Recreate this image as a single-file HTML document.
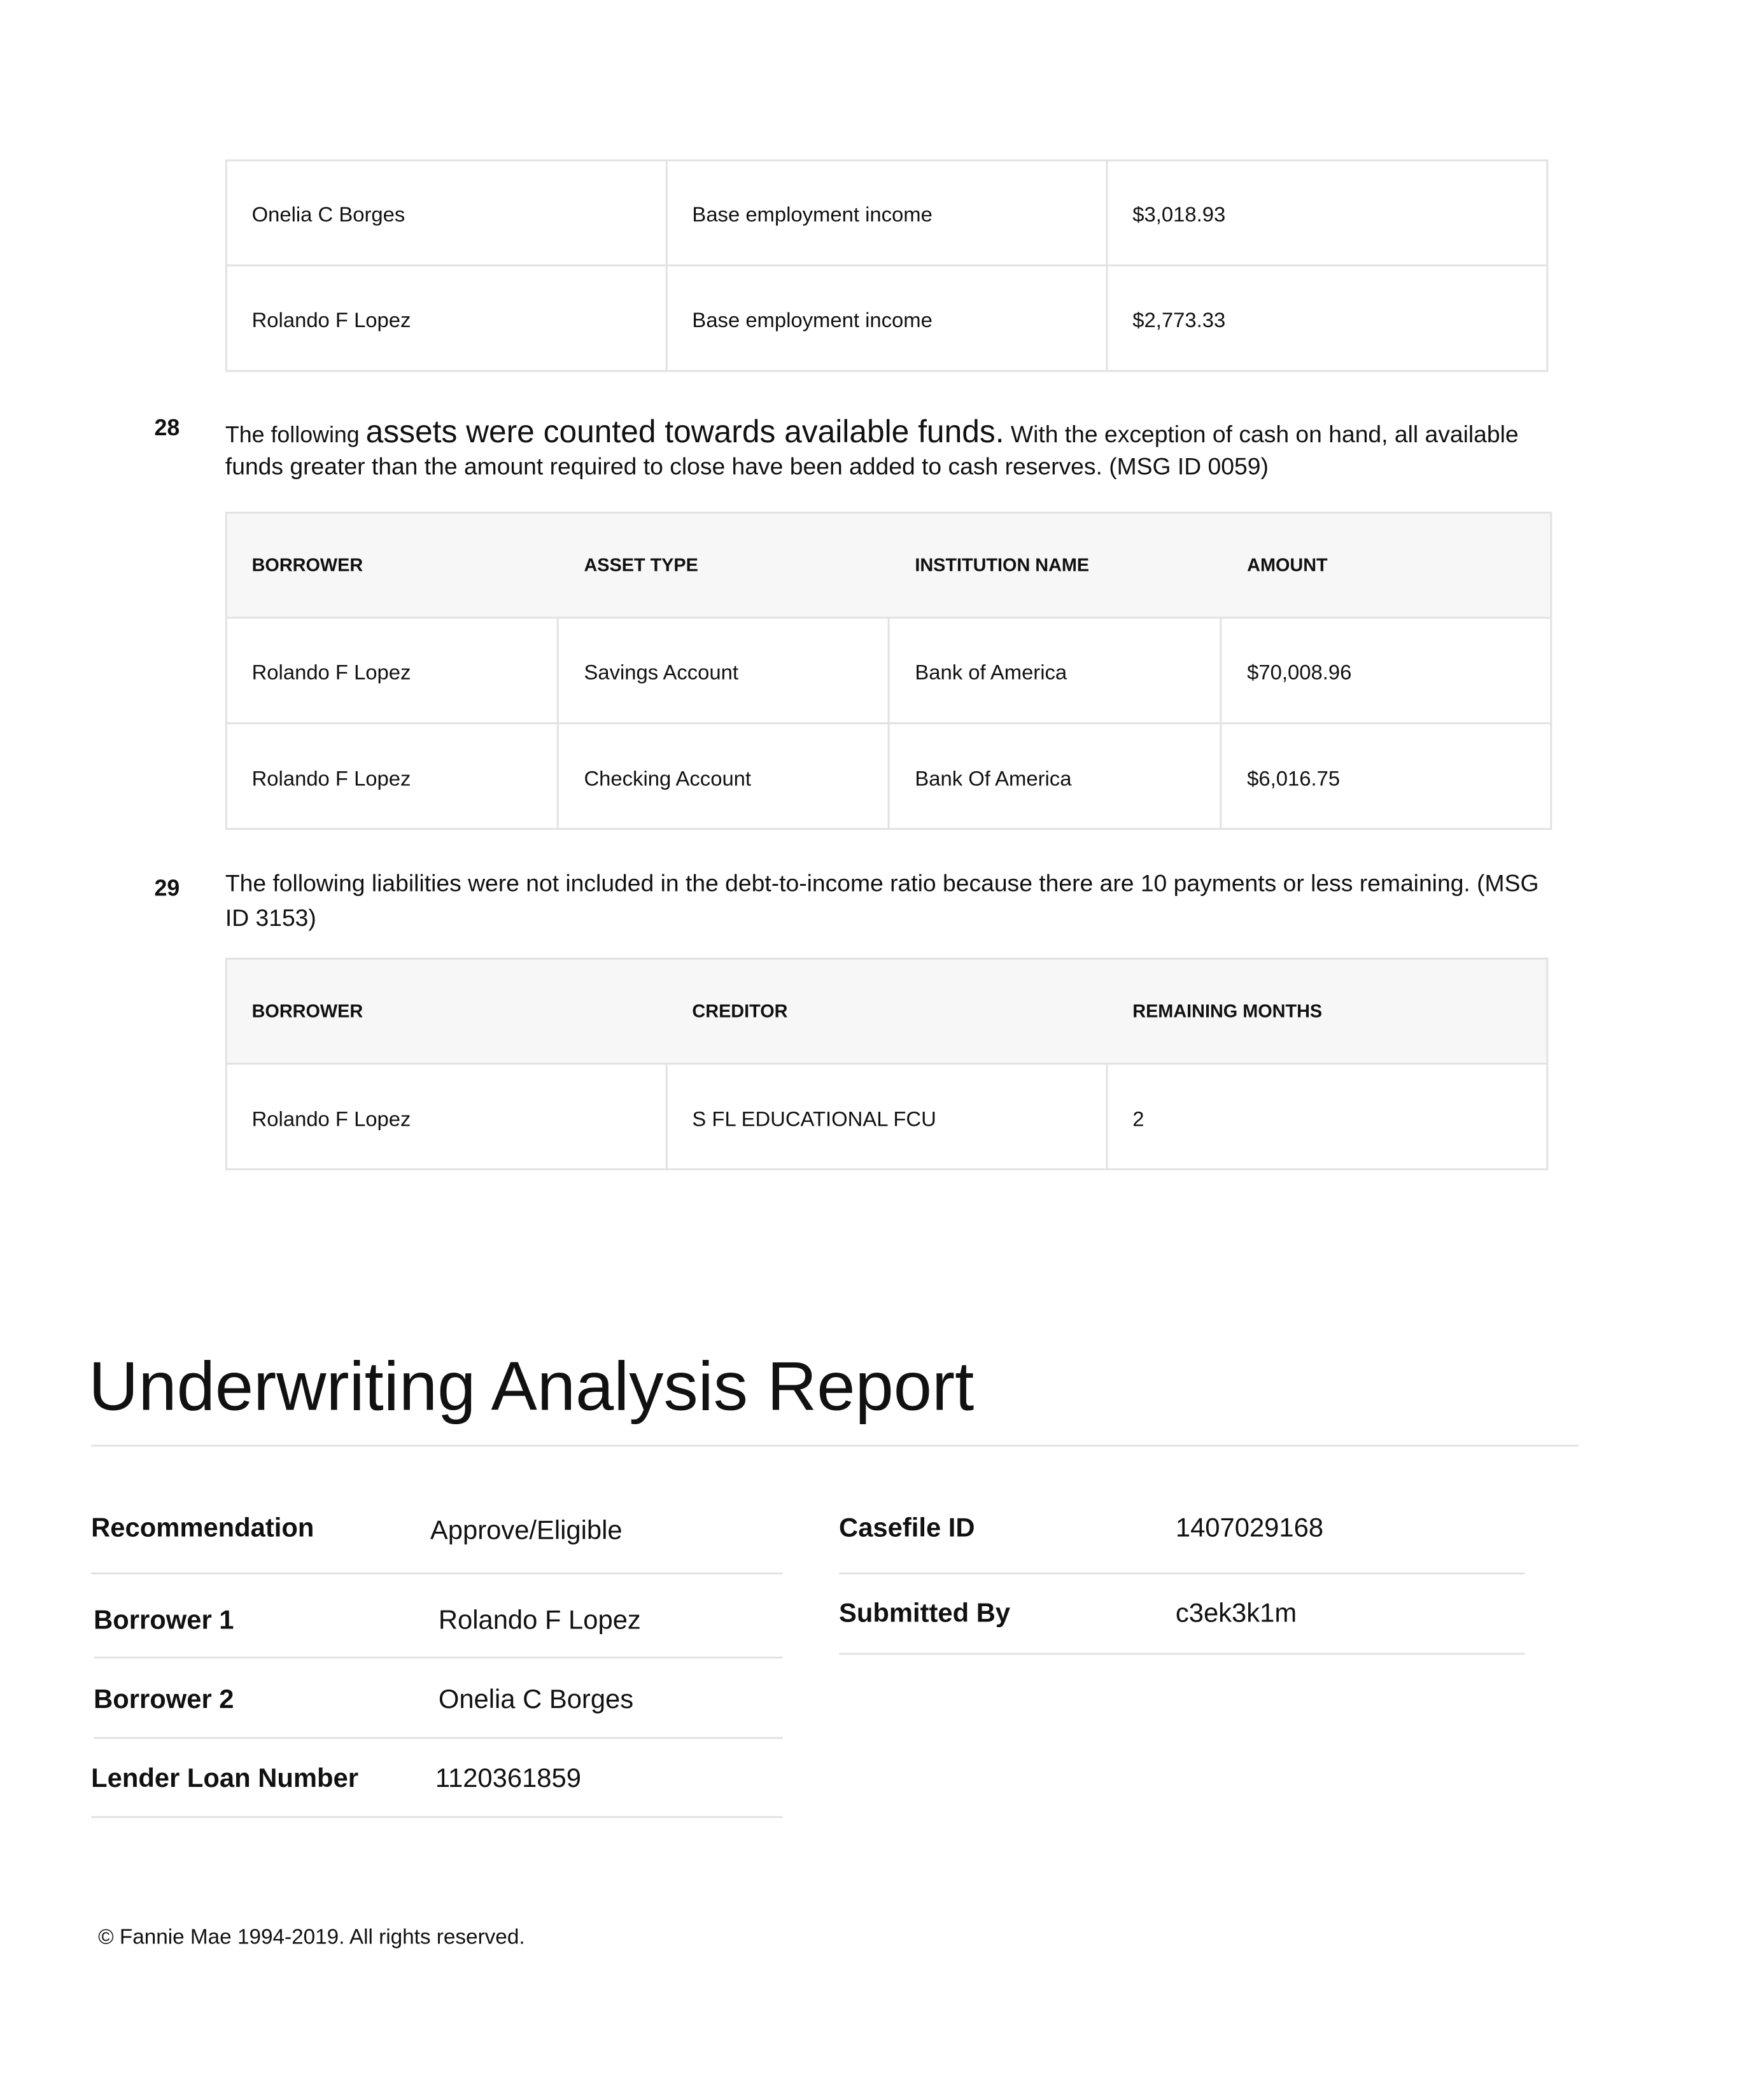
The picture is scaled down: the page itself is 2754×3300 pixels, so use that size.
<!DOCTYPE html>
<html><head><meta charset="utf-8"><style>
html,body{margin:0;padding:0;background:#fff;}
body{width:2754px;height:3300px;position:relative;overflow:hidden;font-family:"Liberation Sans",Arial,sans-serif;color:#111;}
#w{position:absolute;left:0;top:0;width:2754px;height:3300px;transform:scale(0.994);transform-origin:0 0;}
.t{position:absolute;white-space:nowrap;height:60px;line-height:60px;}
.c{font-size:33px;}
.h{font-size:29px;font-weight:bold;}
.b{position:absolute;border:3px solid #e2e2e2;box-sizing:border-box;}
.hl{position:absolute;height:3px;background:#e2e2e2;}
.vl{position:absolute;width:3px;background:#e2e2e2;}
.bg{position:absolute;background:#f7f7f7;}
.p{font-size:37.5px;}
.k{font-size:42px;font-weight:bold;}
.v{font-size:42px;}
</style></head><body><div id="w">

<!-- Table 1 -->
<div class="b" style="left:356px;top:252px;width:2091px;height:336px;"></div>
<div class="hl" style="left:356px;top:418px;width:2091px;"></div>
<div class="vl" style="left:1052px;top:252px;height:336px;"></div>
<div class="vl" style="left:1748px;top:252px;height:336px;"></div>
<div class="t c" style="left:398px;top:309px;">Onelia C Borges</div>
<div class="t c" style="left:1094px;top:309px;">Base employment income</div>
<div class="t c" style="left:1790px;top:309px;">$3,018.93</div>
<div class="t c" style="left:398px;top:476px;">Rolando F Lopez</div>
<div class="t c" style="left:1094px;top:476px;">Base employment income</div>
<div class="t c" style="left:1790px;top:476px;">$2,773.33</div>

<!-- Item 28 -->
<div class="t" style="left:244px;top:646px;font-size:36px;font-weight:bold;">28</div>
<div class="t p" style="left:356px;top:652px;"><span style="font-size:36px;">The following </span><span style="font-size:50px;">assets were counted towards available funds.</span> With the exception of cash on hand, all available</div>
<div class="t p" style="left:356px;top:707px;">funds greater than the amount required to close have been added to cash reserves. (MSG ID 0059)</div>

<!-- Table 2 -->
<div class="bg" style="left:356px;top:809px;width:2097px;height:168px;"></div>
<div class="b" style="left:356px;top:809px;width:2097px;height:503px;"></div>
<div class="hl" style="left:356px;top:975px;width:2097px;"></div>
<div class="hl" style="left:356px;top:1142px;width:2097px;"></div>
<div class="vl" style="left:880px;top:975px;height:337px;"></div>
<div class="vl" style="left:1403px;top:975px;height:337px;"></div>
<div class="vl" style="left:1928px;top:975px;height:337px;"></div>
<div class="t h" style="left:398px;top:864px;">BORROWER</div>
<div class="t h" style="left:923px;top:864px;">ASSET TYPE</div>
<div class="t h" style="left:1446px;top:864px;">INSTITUTION NAME</div>
<div class="t h" style="left:1971px;top:864px;">AMOUNT</div>
<div class="t c" style="left:398px;top:1033px;">Rolando F Lopez</div>
<div class="t c" style="left:923px;top:1033px;">Savings Account</div>
<div class="t c" style="left:1446px;top:1033px;">Bank of America</div>
<div class="t c" style="left:1971px;top:1033px;">$70,008.96</div>
<div class="t c" style="left:398px;top:1201px;">Rolando F Lopez</div>
<div class="t c" style="left:923px;top:1201px;">Checking Account</div>
<div class="t c" style="left:1446px;top:1201px;">Bank Of America</div>
<div class="t c" style="left:1971px;top:1201px;">$6,016.75</div>

<!-- Item 29 -->
<div class="t" style="left:244px;top:1374px;font-size:36px;font-weight:bold;">29</div>
<div class="t p" style="left:356px;top:1366px;">The following liabilities were not included in the debt-to-income ratio because there are 10 payments or less remaining. (MSG</div>
<div class="t p" style="left:356px;top:1421px;">ID 3153)</div>

<!-- Table 3 -->
<div class="bg" style="left:356px;top:1514px;width:2091px;height:168px;"></div>
<div class="b" style="left:356px;top:1514px;width:2091px;height:336px;"></div>
<div class="hl" style="left:356px;top:1680px;width:2091px;"></div>
<div class="vl" style="left:1052px;top:1680px;height:170px;"></div>
<div class="vl" style="left:1748px;top:1680px;height:170px;"></div>
<div class="t h" style="left:398px;top:1569px;">BORROWER</div>
<div class="t h" style="left:1094px;top:1569px;">CREDITOR</div>
<div class="t h" style="left:1790px;top:1569px;">REMAINING MONTHS</div>
<div class="t c" style="left:398px;top:1739px;">Rolando F Lopez</div>
<div class="t c" style="left:1094px;top:1739px;">S FL EDUCATIONAL FCU</div>
<div class="t c" style="left:1790px;top:1739px;">2</div>

<!-- Title -->
<div class="t" style="left:140px;top:2127px;height:130px;line-height:130px;font-size:109px;">Underwriting Analysis Report</div>
<div class="hl" style="left:144px;top:2284px;width:2351px;"></div>

<!-- Key values left -->
<div class="t k" style="left:144px;top:2385px;">Recommendation</div>
<div class="t v" style="left:680px;top:2389px;">Approve/Eligible</div>
<div class="hl" style="left:144px;top:2486px;width:1093px;"></div>
<div class="t k" style="left:148px;top:2531px;">Borrower 1</div>
<div class="t v" style="left:693px;top:2531px;">Rolando F Lopez</div>
<div class="hl" style="left:148px;top:2619px;width:1089px;"></div>
<div class="t k" style="left:148px;top:2656px;">Borrower 2</div>
<div class="t v" style="left:693px;top:2656px;">Onelia C Borges</div>
<div class="hl" style="left:148px;top:2746px;width:1089px;"></div>
<div class="t k" style="left:144px;top:2781px;">Lender Loan Number</div>
<div class="t v" style="left:688px;top:2781px;">1120361859</div>
<div class="hl" style="left:144px;top:2871px;width:1093px;"></div>

<!-- Key values right -->
<div class="t k" style="left:1326px;top:2385px;">Casefile ID</div>
<div class="t v" style="left:1858px;top:2385px;">1407029168</div>
<div class="hl" style="left:1326px;top:2486px;width:1084px;"></div>
<div class="t k" style="left:1326px;top:2520px;">Submitted By</div>
<div class="t v" style="left:1858px;top:2520px;">c3ek3k1m</div>
<div class="hl" style="left:1326px;top:2613px;width:1084px;"></div>

<!-- Footer -->
<div class="t" style="left:155px;top:3033px;font-size:33.5px;">© Fannie Mae 1994-2019. All rights reserved.</div>

</div></body></html>
